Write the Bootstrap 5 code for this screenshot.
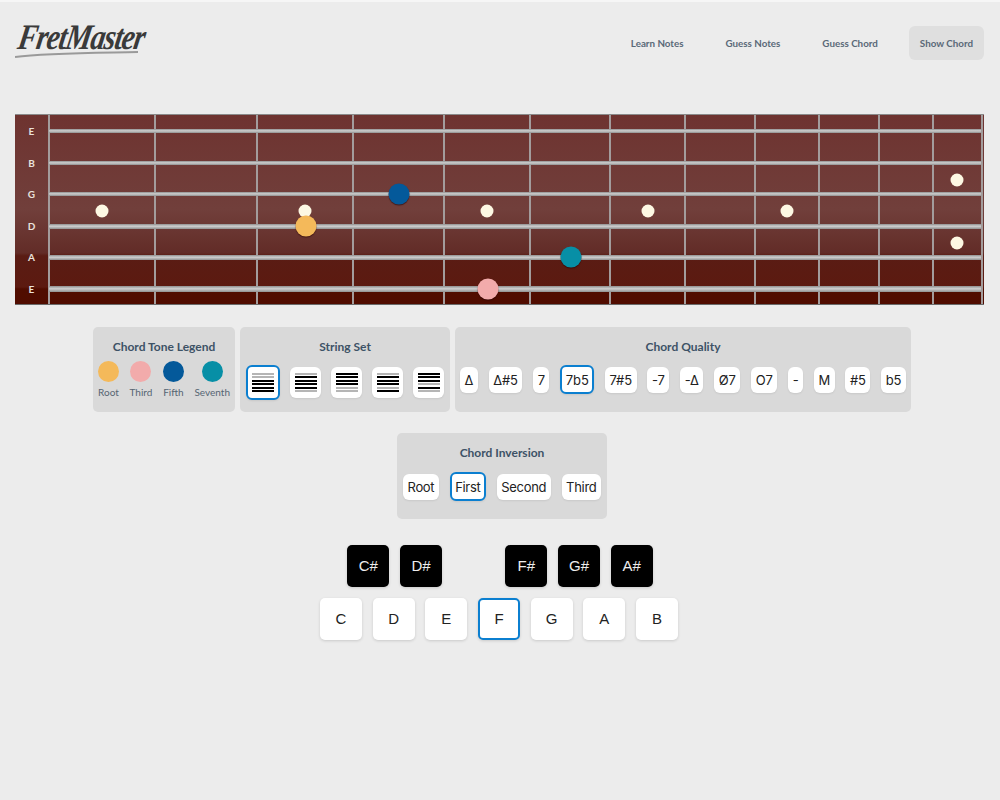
<!doctype html>
<html lang="en">
<head>
<meta charset="utf-8">
<title>FretMaster</title>
<link rel="stylesheet" href="https://cdn.jsdelivr.net/npm/bootstrap@5.3.0/dist/css/bootstrap.min.css">
<style>
html,body{height:100%}
body{background:#ececec;border-top:2px solid #f6f6f6;font-family:"Lato","Liberation Sans",sans-serif;color:#34495e;overflow:hidden}
.topbar{height:112px;padding:17px 16px 0 15px}
.logo-wrap{width:135px;height:42px;position:relative}
.logo-text{font-family:"Liberation Serif",serif;font-style:italic;font-weight:700;font-size:34px;line-height:38px;letter-spacing:-1.2px;color:#3a3a3a;display:block;transform:scale(.86,1.06) skewX(-12deg);transform-origin:left bottom;white-space:nowrap}
.logo-swoosh{position:absolute;left:0;top:31px}
.tab-nav{margin-top:7px}
.tab-link{font-size:9.8px;color:#5a6978;padding:0 11px;height:34px;line-height:34px;border-radius:6px;font-weight:700;text-decoration:none;margin-left:20px}
.tab-link.on{background:#dfdfdf}
.board{margin:0 16px 0 15px;height:191px;position:relative;display:flex;background:linear-gradient(#6e3330 0,#713f3b 50%,#622c27 73%,#5a1c14 74.5%,#5c1a10 91%,#500d00 92%,#500c00 100%);border-top:1px solid #8a8a8a;border-bottom:1px solid #6a6a6a;box-sizing:border-box}
.nutcol{width:33px;display:flex;flex-direction:column;padding-top:1px;flex:none}
.nutcol span{height:31.5px;line-height:31.5px;font-size:10px;font-weight:700;color:#e9e2dc;text-align:center}
.frets{flex:1;display:flex;border-left:2px solid #a39c9c;margin-right:1px}
.fretcell{border-right:2px solid #a39c9c;height:100%}
.gstring{position:absolute;left:34px;right:3px;height:4px;background:linear-gradient(#8f8f8f,#cfcfcf 45%,#8f8f8f)}
.gstring.w5{height:5px}
.gstring.w6{height:6px}
.inlay,.tone{position:absolute;border-radius:50%;transform:translate(-50%,-50%)}
.inlay{width:13px;height:13px;background:#fdf8e3}
.tone{width:21px;height:21px;box-shadow:0 1px 1px rgba(40,0,0,.6)}
.c-root{background:#f4b95a}.c-third{background:#f2abab}.c-fifth{background:#04599a}.c-seventh{background:#078fa6}
.panels-row{margin-top:22px;gap:5px;padding-left:4px}
.panel-box{background:#d9d9d9;border-radius:5px;height:85px;padding:12px 6px 0}
.panel-title{font-size:12px;font-weight:700;color:#3d5266;text-align:center;line-height:15px;margin-bottom:11px}
.legend-box{width:142px;padding:12px 5px 0}
.legend-box .panel-title{margin-bottom:7px}
.legend-row{display:flex;justify-content:space-between}
.legend-item{display:flex;flex-direction:column;align-items:center;font-size:10px;color:#566573;line-height:12px}
.legend-dot{width:21px;height:21px;border-radius:50%;margin-bottom:4px}
.string-box{width:210px}
.quality-box{width:456px;padding:12px 5px 0}
.quality-box .opt{letter-spacing:-.1px}
.opt{background:#fff;border:2px solid transparent;border-radius:6px;font-family:"Inter","Liberation Sans",sans-serif;font-size:13px;letter-spacing:-.3px;color:#222;height:26px;line-height:22px;padding:0 2.5px;box-shadow:0 1px 2px rgba(0,0,0,.08);display:inline-flex;align-items:center;justify-content:center}
.opt.sel{border-color:#0b7fd0;height:29px;padding:0 3.5px}
.opt-row{display:flex;justify-content:space-between;align-items:center}
.set-btn{width:31px;height:31px;background:#fff;border-radius:6px;display:flex;flex-direction:column;justify-content:center;align-items:center;gap:1.4px;box-shadow:0 1px 2px rgba(0,0,0,.08);border:2px solid transparent;padding:0}
.set-btn.sel{width:34px;height:35px;border-color:#0b7fd0}
.set-btn i{display:block;width:22px;height:2px;background:#000}
.set-btn i.g{background:#b5b5b5}
.inv-wrap{margin-top:21px;padding-left:4px}
.inv-box{width:210px;height:86px}
.inv-box .panel-title{margin-bottom:12px}
.keys{margin-top:26px;gap:10.67px}
.keys.lower{margin-top:11px;padding-right:2px}
.key{width:42px;height:42px;border-radius:5px;font-family:"Liberation Sans",sans-serif;font-size:15px;display:flex;align-items:center;justify-content:center;box-shadow:0 1px 3px rgba(0,0,0,.15)}
.key.wt{background:#fff;color:#222}
.key.bk{background:#000;color:#eee}
.key.sel{border:2px solid #0b7fd0}
.key.gap{background:none;box-shadow:none}
</style>
</head>
<body>
<div class="topbar d-flex justify-content-between align-items-start">
  <div class="logo-wrap">
    <span class="logo-text">FretMaster</span>
    <svg class="logo-swoosh" width="125" height="10" viewBox="0 0 125 10"><path d="M0 7C30 3 70 3 123 2" stroke="#9a9a9a" stroke-width="2" fill="none"/></svg>
  </div>
  <nav class="d-flex align-items-center tab-nav">
    <a class="tab-link" href="#">Learn Notes</a>
    <a class="tab-link" href="#">Guess Notes</a>
    <a class="tab-link" href="#">Guess Chord</a>
    <a class="tab-link on" href="#">Show Chord</a>
  </nav>
</div>
<div class="board">
  <div class="nutcol"><span>E</span><span>B</span><span>G</span><span>D</span><span>A</span><span>E</span></div>
  <div class="frets">
    <div class="fretcell" style="width:106px"></div><div class="fretcell" style="width:102px"></div><div class="fretcell" style="width:96px"></div><div class="fretcell" style="width:91px"></div><div class="fretcell" style="width:86px"></div><div class="fretcell" style="width:80px"></div><div class="fretcell" style="width:75px"></div><div class="fretcell" style="width:70px"></div><div class="fretcell" style="width:64px"></div><div class="fretcell" style="width:60px"></div><div class="fretcell" style="width:54px"></div><div class="fretcell" style="width:49px"></div>
  </div>
  <div class="gstring" style="top:14px"></div>
  <div class="gstring" style="top:46px"></div>
  <div class="gstring" style="top:77px"></div>
  <div class="gstring w5" style="top:109px"></div>
  <div class="gstring w5" style="top:140px"></div>
  <div class="gstring w6" style="top:171px"></div>
  <div class="inlay" style="left:87px;top:96.3px"></div>
  <div class="inlay" style="left:290px;top:96.3px"></div>
  <div class="inlay" style="left:472px;top:96.3px"></div>
  <div class="inlay" style="left:632.5px;top:96.3px"></div>
  <div class="inlay" style="left:772px;top:96.3px"></div>
  <div class="inlay" style="left:942px;top:64.7px"></div>
  <div class="inlay" style="left:942px;top:127.7px"></div>
  <div class="tone c-root" style="left:291px;top:110.7px"></div>
  <div class="tone c-fifth" style="left:384.3px;top:79.3px"></div>
  <div class="tone c-seventh" style="left:555.7px;top:142.3px"></div>
  <div class="tone c-third" style="left:472.7px;top:174px"></div>
</div>
<div class="d-flex justify-content-center panels-row">
  <section class="panel-box legend-box">
    <div class="panel-title">Chord Tone Legend</div>
    <div class="legend-row">
      <div class="legend-item"><span class="legend-dot c-root"></span>Root</div>
      <div class="legend-item"><span class="legend-dot c-third"></span>Third</div>
      <div class="legend-item"><span class="legend-dot c-fifth"></span>Fifth</div>
      <div class="legend-item"><span class="legend-dot c-seventh"></span>Seventh</div>
    </div>
  </section>
  <section class="panel-box string-box">
    <div class="panel-title">String Set</div>
    <div class="opt-row">
      <div class="set-btn sel"><i class="g"></i><i class="g"></i><i></i><i></i><i></i><i></i></div>
      <div class="set-btn"><i class="g"></i><i></i><i></i><i></i><i></i><i class="g"></i></div>
      <div class="set-btn"><i></i><i></i><i></i><i></i><i class="g"></i><i class="g"></i></div>
      <div class="set-btn"><i class="g"></i><i></i><i></i><i></i><i class="g"></i><i></i></div>
      <div class="set-btn"><i></i><i></i><i></i><i class="g"></i><i></i><i class="g"></i></div>
    </div>
  </section>
  <section class="panel-box quality-box">
    <div class="panel-title">Chord Quality</div>
    <div class="opt-row">
      <span class="opt">Δ</span><span class="opt">Δ#5</span><span class="opt">7</span><span class="opt sel">7b5</span><span class="opt">7#5</span><span class="opt">-7</span><span class="opt">-Δ</span><span class="opt">Ø7</span><span class="opt">O7</span><span class="opt">-</span><span class="opt">M</span><span class="opt">#5</span><span class="opt">b5</span>
    </div>
  </section>
</div>
<div class="d-flex justify-content-center inv-wrap">
  <section class="panel-box inv-box">
    <div class="panel-title">Chord Inversion</div>
    <div class="opt-row">
      <span class="opt">Root</span><span class="opt sel">First</span><span class="opt">Second</span><span class="opt">Third</span>
    </div>
  </section>
</div>
<div class="d-flex justify-content-center keys">
  <div class="key bk">C#</div><div class="key bk">D#</div><div class="key gap"></div><div class="key bk">F#</div><div class="key bk">G#</div><div class="key bk">A#</div>
</div>
<div class="d-flex justify-content-center keys lower">
  <div class="key wt">C</div><div class="key wt">D</div><div class="key wt">E</div><div class="key wt sel">F</div><div class="key wt">G</div><div class="key wt">A</div><div class="key wt">B</div>
</div>
<script src="https://cdn.jsdelivr.net/npm/bootstrap@5.3.0/dist/js/bootstrap.bundle.min.js"></script>
</body>
</html>
